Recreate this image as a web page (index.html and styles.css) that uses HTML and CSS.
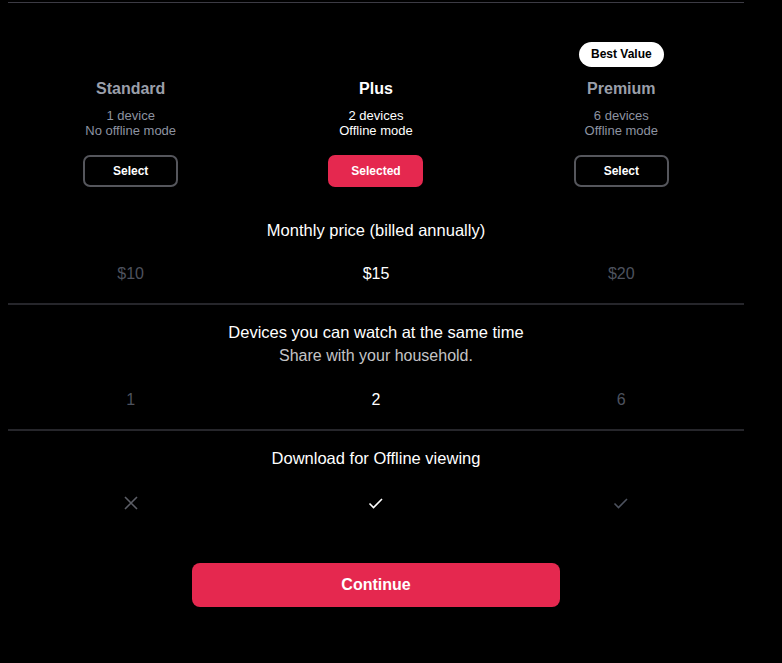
FILE: index.html
```html
<!DOCTYPE html>
<html lang="en">
<head>
    <meta charset="utf-8">
    <meta name="viewport" content="width=device-width, initial-scale=1.0">
    <title>Choose a plan</title>
    <link rel="stylesheet" href="styles.css">
</head>
<body>
    <div class="page">
        <div class="plans">
            <div class="plan">
                <div class="badge-slot"></div>
                <div class="plan-name">Standard</div>
                <div class="plan-info">1 device<br>No offline mode</div>
                <button class="plan-btn">Select</button>
            </div>
            <div class="plan active">
                <div class="badge-slot"></div>
                <div class="plan-name">Plus</div>
                <div class="plan-info">2 devices<br>Offline mode</div>
                <button class="plan-btn selected">Selected</button>
            </div>
            <div class="plan">
                <div class="badge-slot"><span class="badge">Best Value</span></div>
                <div class="plan-name">Premium</div>
                <div class="plan-info">6 devices<br>Offline mode</div>
                <button class="plan-btn">Select</button>
            </div>
        </div>

        <div class="feature">
            <div class="feature-title">Monthly price (billed annually)</div>
            <div class="values">
                <span>$10</span>
                <span class="on">$15</span>
                <span>$20</span>
            </div>
        </div>

        <div class="feature">
            <div class="feature-title">Devices you can watch at the same time</div>
            <div class="feature-sub">Share with your household.</div>
            <div class="values">
                <span>1</span>
                <span class="on">2</span>
                <span>6</span>
            </div>
        </div>

        <div class="feature last">
            <div class="feature-title">Download for Offline viewing</div>
            <div class="values icons">
                <span>
                    <svg width="16" height="16" viewBox="0 0 16 16"><path d="M2 2 L14 14 M14 2 L2 14" stroke="currentColor" stroke-width="1.6" fill="none"/></svg>
                </span>
                <span class="on">
                    <svg width="16" height="16" viewBox="0 0 16 16"><path d="M1.5 8.5 L5.5 12.5 L14 4" stroke="currentColor" stroke-width="1.6" fill="none"/></svg>
                </span>
                <span>
                    <svg width="16" height="16" viewBox="0 0 16 16"><path d="M1.5 8.5 L5.5 12.5 L14 4" stroke="currentColor" stroke-width="1.6" fill="none"/></svg>
                </span>
            </div>
        </div>

        <div class="actions">
            <button class="continue">Continue</button>
        </div>
    </div>
</body>
</html>
```

FILE: styles.css
```css
html, body {
    background-color: #000;
}
body {
    font-family: "Liberation Sans", Arial, sans-serif;
    color: #fff;
    margin: 0;
    padding: 0 8px;
}
.page {
    width: 736px;
    border-top: 1px solid #3c3b44;
    margin-top: 2px;
}
.plans {
    display: grid;
    grid-template-columns: repeat(3, 1fr);
    padding-top: 39px;
}
.plan {
    display: flex;
    flex-direction: column;
    align-items: center;
    color: #8d93a1;
}
.plan.active {
    color: #fff;
}
.badge-slot {
    height: 26px;
    display: flex;
    justify-content: center;
}
.badge {
    background-color: #fff;
    color: #000;
    font-size: 12px;
    font-weight: bold;
    border-radius: 13px;
    padding: 0 12px;
    height: 25px;
    line-height: 25px;
}
.plan-name {
    font-size: 16px;
    font-weight: bold;
    margin-top: 11px;
    line-height: 20px;
}
.plan:not(.active) .plan-name {
    color: #9a9faa;
}
.plan-info {
    font-size: 13px;
    line-height: 15px;
    margin-top: 9px;
    text-align: center;
}
.plan-btn {
    margin-top: 17px;
    width: 95px;
    height: 32px;
    border: 2px solid #55565c;
    border-radius: 7px;
    background-color: #000;
    color: #fff;
    font-family: inherit;
    font-size: 12px;
    font-weight: bold;
    cursor: pointer;
}
.plan-btn.selected {
    background-color: #e5284f;
    border-color: #e5284f;
}
.feature {
    border-bottom: 2px solid #26262b;
    text-align: center;
    padding-top: 33px;
}
.feature + .feature {
    padding-top: 17px;
}
.feature.last {
    border-bottom: none;
}
.feature-title {
    font-size: 16.5px;
    line-height: 20px;
}
.feature-sub {
    font-size: 16px;
    line-height: 20px;
    margin-top: 4px;
    color: #c4c4c6;
}
.values {
    display: grid;
    grid-template-columns: repeat(3, 1fr);
    font-size: 16px;
    line-height: 20px;
    padding: 24px 0 19px;
    color: #4d525e;
}
.values .on {
    color: #fff;
}
.values.icons {
    padding: 27px 0 0;
}
.values.icons span {
    display: flex;
    justify-content: center;
}
.values.icons svg {
    display: block;
}
.values.icons span:first-child {
    color: #5c5e66;
}
.actions {
    display: flex;
    justify-content: center;
    padding-top: 52px;
}
.continue {
    width: 368px;
    height: 44px;
    border: none;
    border-radius: 8px;
    background-color: #e5284f;
    color: #fff;
    font-family: inherit;
    font-size: 16px;
    font-weight: bold;
    cursor: pointer;
}
```
